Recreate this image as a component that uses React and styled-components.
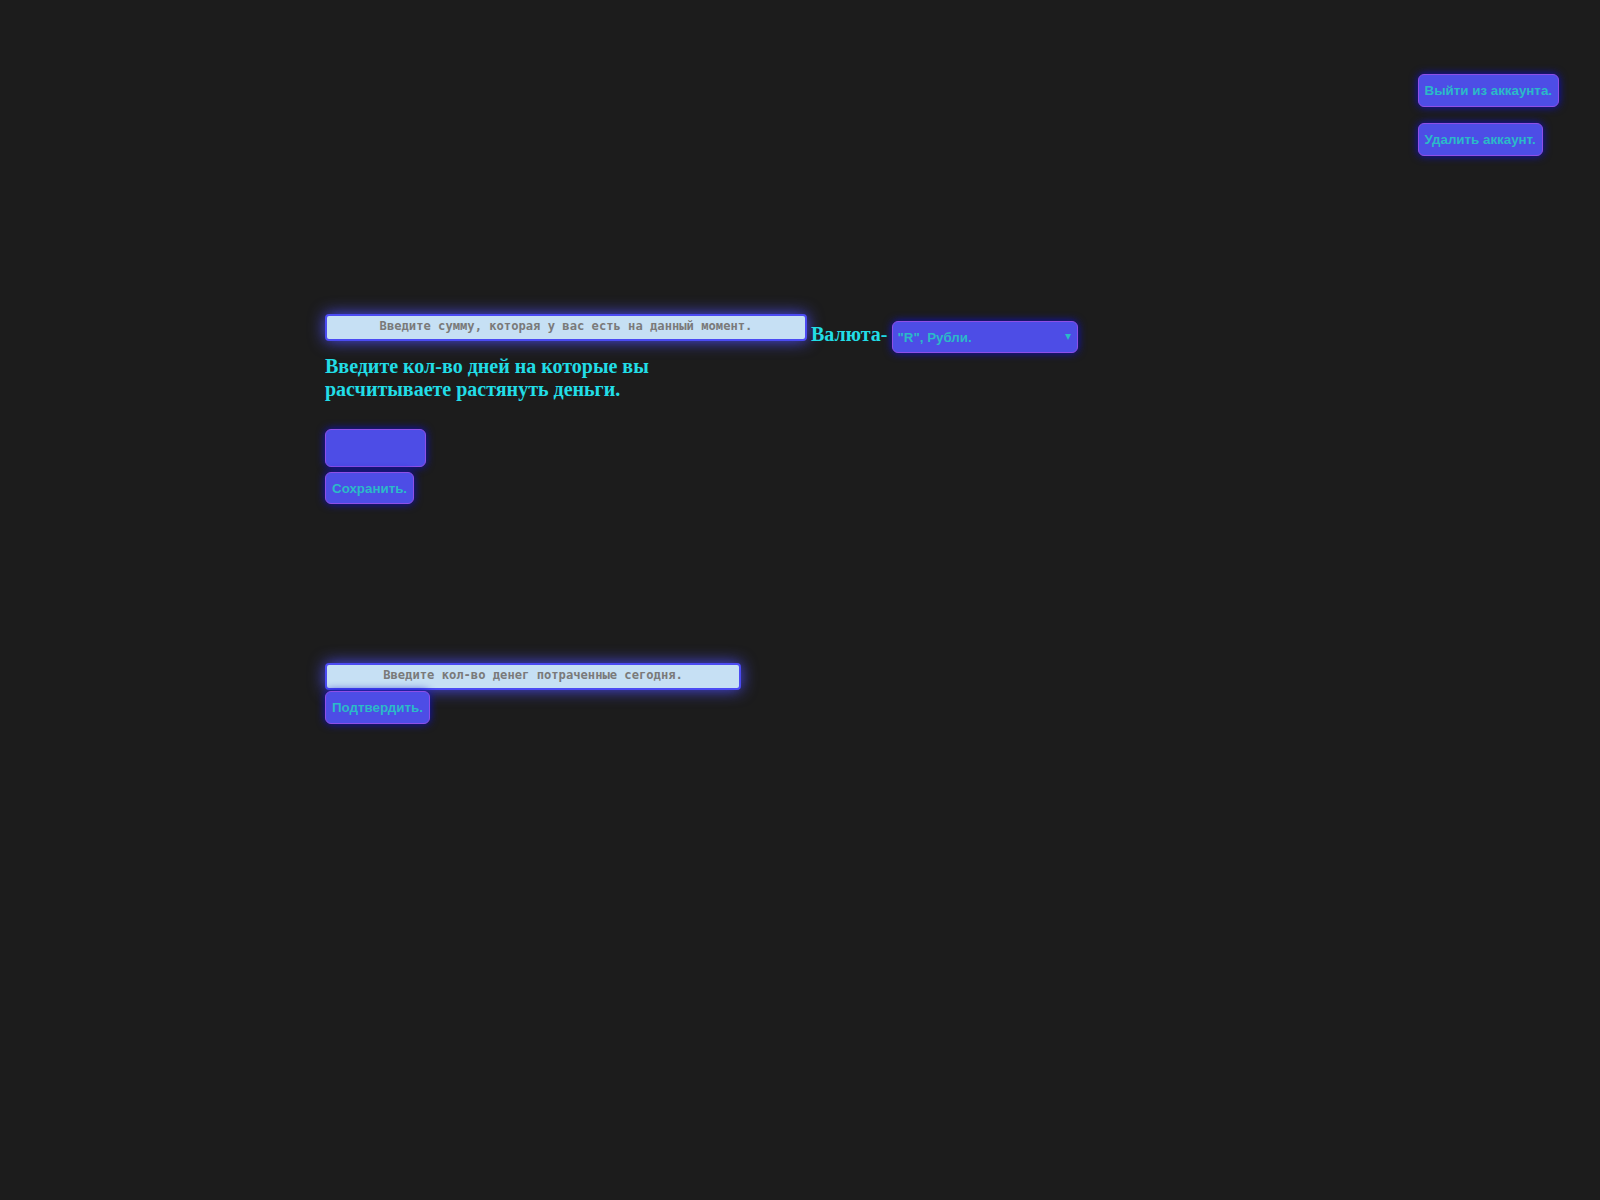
import React from 'react'
import styled, { createGlobalStyle } from 'styled-components'

const GlobalStyle = createGlobalStyle`
  body {
    margin: 0;
    background: #1c1c1c;
  }
`

const Page = styled.div`
  min-height: 100vh;
  background: #1c1c1c;
  padding-top: 74px;
  box-sizing: border-box;
`

const Header = styled.div`
  display: flex;
  justify-content: flex-end;
  padding-right: 41px;
`

const AccountMenu = styled.div`
  display: flex;
  flex-direction: column;
  align-items: flex-start;
  gap: 16px;
`

const Button = styled.button`
  display: block;
  box-sizing: border-box;
  height: ${p => p.$h || 33}px;
  padding: 0 6px;
  margin-top: ${p => p.$mt || 0}px;
  background: #4d4de6;
  border: 1px solid #8f4fe6;
  border-radius: 6px;
  box-shadow: 0 0 8px #1010c8;
  color: #2bbac8;
  font-family: 'Liberation Sans', Arial, sans-serif;
  font-weight: bold;
  font-size: 13.333px;
  cursor: pointer;
`

const Main = styled.main`
  padding-left: 325px;
  margin-top: 158px;
`

const Row = styled.div`
  display: flex;
  align-items: flex-start;
`

const TextField = styled.input`
  display: block;
  box-sizing: border-box;
  width: ${p => p.$w}px;
  height: 27px;
  margin: 0;
  padding: 0 2px 4px;
  background: #c6e0f4;
  border: 2px solid #4b4bf2;
  border-radius: 4px;
  box-shadow: 0 0 16px #4a4af0;
  font-family: 'DejaVu Sans Mono', monospace;
  font-weight: bold;
  font-size: 12.15px;
  text-align: center;
  outline: none;

  &::placeholder {
    color: #7a7a7a;
  }
`

const CurrencyLabel = styled.span`
  margin: 9px 0 0 4px;
  color: #22dde6;
  font-family: 'Liberation Serif', 'Times New Roman', serif;
  font-weight: bold;
  font-size: 20px;
  line-height: 23px;
`

const SelectWrap = styled.div`
  position: relative;
  margin: 7px 0 0 5px;

  &::after {
    content: '';
    position: absolute;
    right: 7px;
    top: 13px;
    border-left: 3px solid transparent;
    border-right: 3px solid transparent;
    border-top: 6px solid #2bbac8;
    pointer-events: none;
  }
`

const CurrencySelect = styled.select`
  display: block;
  box-sizing: border-box;
  width: 186px;
  height: 32px;
  margin: 0;
  padding: 0 4px;
  appearance: none;
  background: #4d4de6;
  border: 1px solid #8f4fe6;
  border-radius: 6px;
  box-shadow: 0 0 8px #1010c8;
  color: #2bbac8;
  font-family: 'Liberation Sans', Arial, sans-serif;
  font-weight: bold;
  font-size: 13.333px;
  outline: none;
`

const DaysTitle = styled.h2`
  max-width: 400px;
  margin: 2px 0 0;
  color: #22dde6;
  font-family: 'Liberation Serif', 'Times New Roman', serif;
  font-weight: bold;
  font-size: 20px;
  line-height: 23px;
`

const DaysInput = styled.input`
  display: block;
  box-sizing: border-box;
  width: 101px;
  height: 38px;
  margin: 28px 0 0;
  background: #4d4de6;
  border: 1px solid #8f4fe6;
  border-radius: 6px;
  box-shadow: 0 0 8px #1010c8;
  color: #2bbac8;
  font-family: 'Liberation Sans', Arial, sans-serif;
  font-weight: bold;
  font-size: 13.333px;
  outline: none;
`

const SpendSection = styled.section`
  margin-top: 159px;
`

export default function App() {
  return (
    <Page>
      <GlobalStyle />
      <Header>
        <AccountMenu>
          <Button>Выйти из аккаунта.</Button>
          <Button>Удалить аккаунт.</Button>
        </AccountMenu>
      </Header>
      <Main>
        <section>
          <Row>
            <TextField $w={482} placeholder="Введите сумму, которая у вас есть на данный момент." />
            <CurrencyLabel>Валюта-</CurrencyLabel>
            <SelectWrap>
              <CurrencySelect defaultValue="rub">
                <option value="rub">"R", Рубли.</option>
                <option value="usd">"$", Доллары.</option>
                <option value="eur">"€", Евро.</option>
              </CurrencySelect>
            </SelectWrap>
          </Row>
          <DaysTitle>Введите кол-во дней на которые вы расчитываете растянуть деньги.</DaysTitle>
          <DaysInput type="number" />
          <Button $mt={5} $h={32}>Сохранить.</Button>
        </section>
        <SpendSection>
          <TextField $w={416} placeholder="Введите кол-во денег потраченные сегодня." />
          <Button $mt={1}>Подтвердить.</Button>
        </SpendSection>
      </Main>
    </Page>
  )
}
